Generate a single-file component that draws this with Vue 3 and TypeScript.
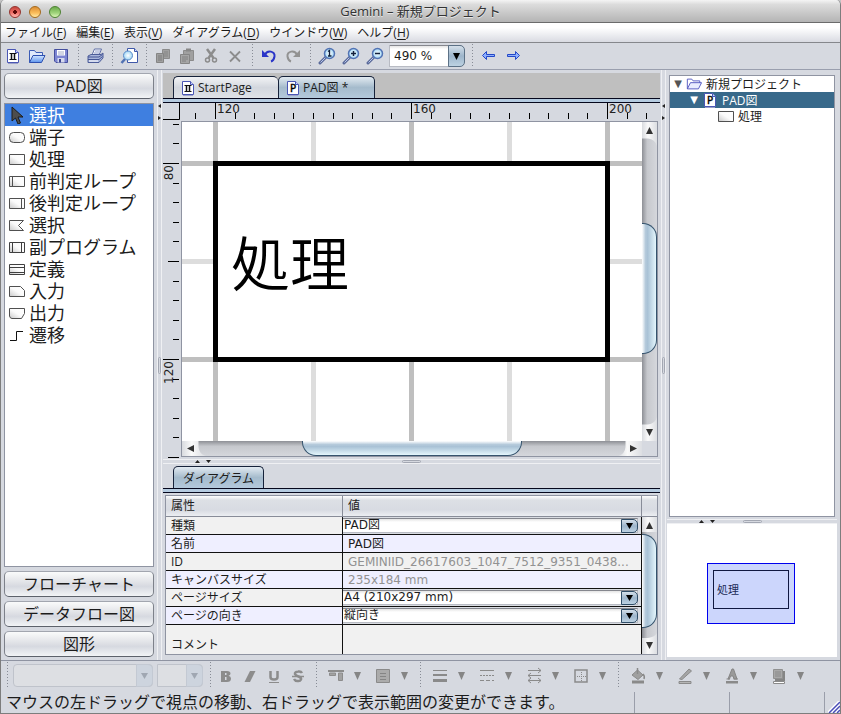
<script setup lang="ts">
import { computed, onBeforeUnmount, onMounted, ref } from 'vue'

interface Menu { label: string; key: string }
interface Tool { icon: string; label: string; disabled?: boolean }
interface Shape { icon: string; label: string }
interface Property { name: string; value: string; kind: 'combo' | 'text' | 'muted' }
interface Tick { pos: number; size: number; label: string }

const menus: Menu[] = [
  { label: 'ファイル', key: 'F' },
  { label: '編集', key: 'E' },
  { label: '表示', key: 'V' },
  { label: 'ダイアグラム', key: 'D' },
  { label: 'ウインドウ', key: 'W' },
  { label: 'ヘルプ', key: 'H' },
]

const page = '<path d="M3.500 2.500H11.500L14.500 5.500V15.500H3.500Z" fill="#fff" stroke="#4a56b4"/><path d="M11.500 2.500V5.500H14.500" fill="#cdd3ff" stroke="#4a56b4"/><path d="M4 16.500H14" stroke="#9aa0c8"/>'
const lens = '<path d="M2 16L8 10" stroke="#5a6a9a" stroke-width="3" stroke-linecap="round"/><path d="M2.500 15.500L7.500 10.500" stroke="#b8c6ea"/><circle cx="11.500" cy="6.500" r="5" fill="url(#g-lens)" stroke="#5273b4" stroke-width="1.500"/>'

const icons: Record<string, string> = {
  fresh: page + '<path d="M5.500 6.500H12.500M5.500 12.500H12.500" stroke="#111"/><path d="M7.500 6.500V12.500M10.500 6.500V12.500" stroke="#111" stroke-width="1.500"/>',
  doc: page + '<text x="9" y="13" text-anchor="middle" font-family="DejaVu Sans, sans-serif" font-size="10" fill="#000" stroke="#000" stroke-width="0.400">P</text>',
  open: '<path d="M1.500 15.500V3.500H6.500L8 5.500H14.500V8" fill="#dfe9fb" stroke="#3b5bb5"/><path d="M1.500 15.500L5 8.500H17L13.500 15.500Z" fill="url(#g-blue)" stroke="#2d50b0"/>',
  save: '<path d="M2.500 2.500H15.500V15.500H4L2.500 14Z" fill="#7d86d2" stroke="#454f9e"/><path d="M5 3H13V8.500H5Z" fill="#fff"/><path d="M6 5H12M6 7H12" stroke="#a5adc8"/><path d="M5.500 11H12.500V15.500H5.500Z" fill="#d6daee"/><path d="M7 12H9V15.500H7Z" fill="#3d4690"/>',
  print: '<path d="M6 8L8.500 2H15.500L13 8Z" fill="#fff" stroke="#5d6ca5"/><path d="M9 4H14M8 6H13" stroke="#8c9ac9"/><path d="M2 9L5 7.500H15L17 6V11L13 15.500H2Z" fill="#a9b6dc" stroke="#4c5c98"/><path d="M2 10H13L16.500 7.500M2 12.500H13L16.500 9.500" fill="none" stroke="#425394"/><path d="M3 14H12" stroke="#fff"/>',
  preview: '<path d="M7.500 1.500H14.500L17.500 4.500V15.500H7.500Z" fill="#fff" stroke="#3f58a8"/><path d="M14.500 1.500V4.500H17.500" fill="#cdd8ff" stroke="#3f58a8"/><path d="M1.500 16L5 12" stroke="#5273b4" stroke-width="2.500"/><circle cx="8" cy="8.500" r="4.500" fill="url(#g-lens)" stroke="#5b8ac8"/>',
  copy: '<path d="M8.500 2.500H15.500V11.500H8.500Z" fill="#a0a0a0" stroke="#8b8b8b"/><path d="M10 5H14M10 7H14M10 9H14" stroke="#858585"/><path d="M2.500 6.500H9.500V15.500H2.500Z" fill="#a0a0a0" stroke="#858585"/><path d="M4 9H8M4 11H8M4 13H8" stroke="#7c7c7c"/>',
  paste: '<path d="M5.500 3.500H15.500V13.500H5.500Z" fill="#a0a0a0" stroke="#8b8b8b"/><path d="M8 1.500H13V4.500H8Z" fill="#888"/><path d="M2.500 7.500H11.500V16.500H2.500Z" fill="#a5a5a5" stroke="#858585"/><path d="M4 10H10M4 12H10M4 14H8" stroke="#808080"/>',
  cut: '<path d="M5 2L11.500 11M13 2L6.500 11" stroke="#8c8c8c" stroke-width="2.500"/><circle cx="5.500" cy="13" r="2" fill="none" stroke="#8c8c8c" stroke-width="1.500"/><circle cx="12.500" cy="13" r="2" fill="none" stroke="#8c8c8c" stroke-width="1.500"/>',
  remove: '<path d="M4 4.500L14 14.500M14 4.500L4 14.500" stroke="#8c8c8c" stroke-width="1.800"/>',
  undo: '<path d="M5 8C7 2.500 15.500 4 14.500 9.500C14 12.500 12.500 14 11 14.500" fill="none" stroke="#2a35c8" stroke-width="2"/><path d="M2 3V10H9Z" fill="#2a35c8"/>',
  redo: '<path d="M13 8C11 2.500 2.500 4 3.500 9.500C4 12.500 5.500 14 7 14.500" fill="none" stroke="#929292" stroke-width="2"/><path d="M16 3V10H9Z" fill="#929292"/>',
  zoomOne: lens + '<path d="M10 4.500L11.500 3.500V9M10 9H13.500" fill="none" stroke="#10203c" stroke-width="1.300"/>',
  zoomIn: lens + '<path d="M9 6.500H14M11.500 4V9" stroke="#10203c" stroke-width="1.500"/>',
  zoomOut: lens + '<path d="M9 6.500H14" stroke="#10203c" stroke-width="1.500"/>',
  back: '<path d="M2.500 8.500L6.500 4.500V7.500H14.500V9.500H6.500V12.500Z" fill="#8fb0ff" stroke="#2348c8"/>',
  forward: '<path d="M15.500 8.500L11.500 4.500V7.500H3.500V9.500H11.500V12.500Z" fill="#8fb0ff" stroke="#2348c8"/>',
  pointer: '<path d="M4 1V15L7.500 12L10 18L12.500 17L10 11H15Z" fill="#4d4d4d" stroke="#1c1c1c"/>',
  terminal: '<rect x="1.500" y="4.500" width="15" height="10" rx="4" fill="url(#g-cell)" stroke="#505050"/>',
  process: '<path d="M1.500 4.500H16.500V14.500H1.500Z" fill="url(#g-cell)" stroke="#505050"/>',
  preLoop: '<path d="M1.500 4.500H16.500V14.500H1.500ZM4.500 4.500V14.500" fill="url(#g-cell)" stroke="#505050"/>',
  postLoop: '<path d="M1.500 4.500H16.500V14.500H1.500ZM13.500 4.500V14.500" fill="url(#g-cell)" stroke="#505050"/>',
  choice: '<path d="M1.500 4.500H15.500L10.500 9.500L15.500 14.500H1.500Z" fill="url(#g-cell)" stroke="#505050"/>',
  sub: '<path d="M1.500 4.500H16.500V14.500H1.500ZM4.500 4.500V14.500M13.500 4.500V14.500" fill="url(#g-cell)" stroke="#404040"/>',
  define: '<path d="M1.500 4.500H16.500V14.500H1.500ZM1.500 7.500H16.500M1.500 12.500H16.500" fill="url(#g-cell)" stroke="#404040"/>',
  input: '<path d="M1.500 4.500H12.500L16.500 8.500V14.500H1.500Z" fill="url(#g-cell)" stroke="#505050"/>',
  output: '<path d="M1.500 4.500H16.500V9.500L13.500 14.500H4Q2 14.500 1.500 12Z" fill="url(#g-cell)" stroke="#505050"/>',
  move: '<path d="M2 14.500H8.500V5.500H15" fill="none" stroke="#111"/>',
  folder: '<path d="M1.500 14.500V3.500H6.500L8 5.500H15.500V8" fill="#fff" stroke="#4b50bd"/><path d="M1.500 14.500L5 7.500H17.500L14 14.500Z" fill="#e9ecff" stroke="#4b50bd"/>',
  bold: '<path d="M4 4H10Q13.500 4 13.500 6.500Q13.500 8.200 11.500 8.800Q14 9.300 14 11.500Q14 15 10 15H4Z" fill="#8c8c8c"/><path d="M8 6H9.500V8H8ZM8 10H9.500V13H8Z" fill="#d6d9e0"/>',
  italic: '<path d="M9 4H14.500L9 15H3.500Z" fill="#8c8c8c"/>',
  underline: '<path d="M5.500 4V10Q5.500 12.500 9 12.500Q12.500 12.500 12.500 10V4" fill="none" stroke="#8c8c8c" stroke-width="2.500"/><path d="M4 15.500H14" stroke="#8c8c8c"/>',
  strike: '<path d="M13 6Q12 4 9 4.500Q5.500 5 6 7Q6.500 8.500 9.500 9.500Q12.500 10.500 12 12.500Q11 14.500 8.500 14Q6 14 5 12" fill="none" stroke="#8c8c8c" stroke-width="2.500"/><path d="M3 9.500H15" stroke="#8c8c8c" stroke-width="1.500"/>',
  align: '<path d="M1 4H17" stroke="#8c8c8c" stroke-width="2"/><path d="M2.500 6H8.500V8.500H2.500ZM11.500 6H15.500V13.500H11.500Z" fill="#a2a2a2" stroke="#8c8c8c"/>',
  box: '<path d="M2.500 2.500H15.500V15.500H2.500Z" fill="#ababab" stroke="#8a8a8a"/><path d="M6 6.500H12M6 9.500H12M6 12.500H12" stroke="#858585"/>',
  lines: '<path d="M2 3.500H16" stroke="#8a8a8a"/><path d="M2 8H16" stroke="#8a8a8a" stroke-width="2"/><path d="M2 13.500H16" stroke="#8a8a8a" stroke-width="3"/>',
  dashes: '<path d="M2 3.500H16" stroke="#8a8a8a"/><path d="M2 8.500H16" stroke="#8a8a8a" stroke-dasharray="2 1"/><path d="M2 13.500H16" stroke="#8a8a8a" stroke-dasharray="4 2"/>',
  arrows: '<path d="M3 3.500H16M13 1L16 3.500L13 6M3 8.500H16M6 6L3 8.500L6 11M3 13.500H16M6 11L3 13.500L6 16M13 11L16 13.500L13 16" fill="none" stroke="#8a8a8a"/>',
  border: '<path d="M3 3H15V15H3Z" fill="none" stroke="#8a8a8a" stroke-width="1.500"/><path d="M9.500 5V14M5 9.500H14" stroke="#8a8a8a" stroke-dasharray="1 1"/>',
  bucket: '<path d="M3 8L8.500 3L14 8L9 12.500Z" fill="#a0a0a0" stroke="#8a8a8a"/><path d="M8.500 1V7M14 7Q16 9 15 12" fill="none" stroke="#8a8a8a" stroke-width="1.500"/><path d="M3 13.500H15V16.500H3Z" fill="#8a8a8a"/>',
  pen: '<path d="M3.500 12L13 2L15.500 4L6 12.500Z" fill="#a5a5a5" stroke="#8a8a8a"/><path d="M3 14.500H15V16.500H3Z" fill="#b5b5b5" stroke="#8a8a8a"/>',
  color: '<path d="M3.500 12H7M10.500 12H15" stroke="#8a8a8a"/><path d="M5 12L9 2H10.500L14 12H11L10 9H7.500L6.500 12Z" fill="#9a9a9a" stroke="#858585"/><path d="M3 14H15V16.500H3Z" fill="#8a8a8a"/>',
  shadow: '<path d="M5 4H15V14H5Z" fill="#858585"/><path d="M3.500 2.500H12.500V11.500H3.500Z" fill="#a8a8a8" stroke="#909090"/><path d="M5 5H11M5 7H11M5 9H11" stroke="#8a8a8a"/><path d="M3.500 14.500H14.500V16.500H3.500Z" fill="#fff" stroke="#8a8a8a"/>',
}

const toolGroups: Tool[][] = [
  [{ icon: 'fresh', label: '新規' }, { icon: 'open', label: '開く' }, { icon: 'save', label: '保存' }],
  [{ icon: 'print', label: '印刷' }],
  [{ icon: 'preview', label: '印刷プレビュー' }],
  [
    { icon: 'copy', label: 'コピー', disabled: true },
    { icon: 'paste', label: '貼り付け', disabled: true },
    { icon: 'cut', label: '切り取り', disabled: true },
    { icon: 'remove', label: '削除', disabled: true },
  ],
  [{ icon: 'undo', label: '元に戻す' }, { icon: 'redo', label: 'やり直し', disabled: true }],
  [{ icon: 'zoomOne', label: '等倍' }, { icon: 'zoomIn', label: '拡大' }, { icon: 'zoomOut', label: '縮小' }],
]
const historyTools: Tool[] = [{ icon: 'back', label: '戻る' }, { icon: 'forward', label: '進む' }]

const shapes: Shape[] = [
  { icon: 'pointer', label: '選択' },
  { icon: 'terminal', label: '端子' },
  { icon: 'process', label: '処理' },
  { icon: 'preLoop', label: '前判定ループ' },
  { icon: 'postLoop', label: '後判定ループ' },
  { icon: 'choice', label: '選択' },
  { icon: 'sub', label: '副プログラム' },
  { icon: 'define', label: '定義' },
  { icon: 'input', label: '入力' },
  { icon: 'output', label: '出力' },
  { icon: 'move', label: '遷移' },
]
const activeShape = ref(0)
const palettes = ['フローチャート', 'データフロー図', '図形']

const properties: Property[] = [
  { name: '種類', value: 'PAD図', kind: 'combo' },
  { name: '名前', value: 'PAD図', kind: 'text' },
  { name: 'ID', value: 'GEMINIID_26617603_1047_7512_9351_0438...', kind: 'muted' },
  { name: 'キャンバスサイズ', value: '235x184 mm', kind: 'muted' },
  { name: 'ページサイズ', value: 'A4 (210x297 mm)', kind: 'combo' },
  { name: 'ページの向き', value: '縦向き', kind: 'combo' },
  { name: 'コメント', value: '', kind: 'text' },
]

const styleTools: Tool[] = [
  { icon: 'bold', label: '太字' },
  { icon: 'italic', label: '斜体' },
  { icon: 'underline', label: '下線' },
  { icon: 'strike', label: '取り消し線' },
]
const formatGroups: Tool[][] = [
  [{ icon: 'align', label: '配置' }, { icon: 'box', label: '文字位置' }],
  [{ icon: 'lines', label: '線の太さ' }, { icon: 'dashes', label: '線種' }, { icon: 'arrows', label: '矢印' }, { icon: 'border', label: '枠線' }],
  [{ icon: 'bucket', label: '塗りつぶし' }, { icon: 'pen', label: '線の色' }, { icon: 'color', label: '文字色' }, { icon: 'shadow', label: '影' }],
]

// The rulers show only the ticks that fit in the editor.
const editor = ref<HTMLElement | null>(null)
const room = ref({ across: 0, down: 0 })
function measure() {
  if (!editor.value) return
  room.value = { across: editor.value.clientWidth, down: editor.value.clientHeight - 18 }
}
onMounted(() => {
  measure()
  window.addEventListener('resize', measure)
})
onBeforeUnmount(() => window.removeEventListener('resize', measure))

// One tick every 4 units, a labelled one every 40.
const step = 19.6
function ticks(origin: number, firstValue: number, from: number, limit: number, labelRoom: number, half: boolean): Tick[] {
  const out: Tick[] = []
  for (let k = from; Math.round(origin + k * step) < limit; k++) {
    const pos = Math.round(origin + k * step)
    const major = k % 10 === 0
    const size = major ? 16 : half && k % 5 === 0 ? 11 : 6
    out.push({ pos, size, label: major && pos + labelRoom < limit ? String(firstValue + k * 4) : '' })
  }
  return out
}
const ticksAcross = computed(() => ticks(52, 120, -1, room.value.across, 28, false))
const ticksDown = computed(() => ticks(42, 80, -2, room.value.down, 28, true))

const gridAcross = Array.from({ length: 16 }, (_, i) => ({ at: 31 + i * 98, strong: i % 2 === 0 }))
const gridDown = Array.from({ length: 12 }, (_, i) => ({ at: 39 + i * 98, strong: i % 2 === 0 }))

const canvasV = [77, 130, 63]
const canvasH = [96, 219, 96]
const sheetV = [2, 94, 5]
</script>

<template>
  <div class="window">
    <svg class="defs" width="0" height="0" aria-hidden="true">
      <defs>
        <linearGradient id="g-blue" x1="0" y1="0" x2="0" y2="1"><stop offset="0" stop-color="#d4e6ff" /><stop offset="1" stop-color="#5b93ee" /></linearGradient>
        <linearGradient id="g-cell" x1="0" y1="1" x2="1" y2="0"><stop offset="0" stop-color="#c9c9c9" /><stop offset="0.5" stop-color="#fbfbfb" /><stop offset="1" stop-color="#ffffff" /></linearGradient>
        <radialGradient id="g-lens"><stop offset="0" stop-color="#ffffff" /><stop offset="1" stop-color="#9fd6f5" /></radialGradient>
        <linearGradient id="g-cap" x1="0" y1="0" x2="1" y2="0"><stop offset="0" stop-color="#d9dbdf" /><stop offset="0.4" stop-color="#fafafa" /><stop offset="1" stop-color="#dcdee2" /></linearGradient>
      </defs>
    </svg>

    <header class="title">
      <div class="lights">
        <button class="light red" aria-label="閉じる"></button>
        <button class="light amber" aria-label="しまう"></button>
        <button class="light green" aria-label="拡大"></button>
      </div>
      <h1>Gemini – 新規プロジェクト</h1>
    </header>

    <nav class="menus">
      <button v-for="m in menus" :key="m.key">{{ m.label }}(<u>{{ m.key }}</u>)</button>
    </nav>

    <div class="toolbar">
      <template v-for="(group, g) in toolGroups" :key="g">
        <i v-if="g" class="sep"></i>
        <button v-for="t in group" :key="t.icon" class="tool" :aria-label="t.label" :disabled="t.disabled">
          <svg width="18" height="18" viewBox="0 0 18 18" v-html="icons[t.icon]"></svg>
        </button>
      </template>
      <span class="combo zoom">
        <select aria-label="倍率"><option>490 %</option></select>
        <span class="drop"><svg width="9" height="7" viewBox="0 0 9 7"><path d="M1 0H8L4.500 7Z" /></svg></span>
      </span>
      <i class="sep"></i>
      <button v-for="t in historyTools" :key="t.icon" class="tool" :aria-label="t.label">
        <svg width="18" height="18" viewBox="0 0 18 18" v-html="icons[t.icon]"></svg>
      </button>
    </div>

    <main class="body">
      <aside class="palette">
        <button class="bar">PAD図</button>
        <ul class="shapes">
          <li v-for="(s, i) in shapes" :key="i">
            <button :class="{ active: i === activeShape }" @click="activeShape = i">
              <svg width="18" height="18" viewBox="0 0 18 18" v-html="icons[s.icon]"></svg>{{ s.label }}
            </button>
          </li>
        </ul>
        <button v-for="p in palettes" :key="p" class="bar">{{ p }}</button>
      </aside>

      <div class="split-v left">
        <svg width="3" height="16" viewBox="0 0 3 16"><path d="M3 0V4L0 2ZM0 12V16L3 14Z" fill="#222" /></svg>
        <i class="grip"></i>
      </div>

      <section class="center">
        <div class="tabs gray">
          <button class="tab first"><svg width="18" height="18" viewBox="0 0 18 18" v-html="icons.fresh"></svg>StartPage</button>
          <button class="tab second on"><svg width="18" height="18" viewBox="0 0 18 18" v-html="icons.doc"></svg>PAD図 *</button>
        </div>
        <div class="rail"></div>

        <div ref="editor" class="editor">
          <svg class="ruler-h" width="100%" height="18">
            <path d="M0 16.500H16.500V0" fill="none" stroke="#000" />
            <template v-for="t in ticksAcross" :key="t.pos">
              <rect :x="t.pos" :y="16 - t.size" width="1" :height="t.size" />
              <text v-if="t.label" :x="t.pos + 2" y="10">{{ t.label }}</text>
            </template>
          </svg>
          <svg class="ruler-v" width="18" height="100%">
            <template v-for="t in ticksDown" :key="t.pos">
              <rect :x="16 - t.size" :y="t.pos" :width="t.size" height="1" />
              <text v-if="t.label" text-anchor="end" :transform="`translate(10 ${t.pos + 2}) rotate(-90)`">{{ t.label }}</text>
            </template>
          </svg>
          <div class="view">
            <svg class="canvas" width="100%" height="100%">
              <rect width="100%" height="100%" fill="#fff" />
              <rect v-for="l in gridDown" :key="'h' + l.at" x="0" :y="l.at" width="100%" height="5" :fill="l.strong ? '#bfbfbf' : '#dddddd'" />
              <rect v-for="l in gridAcross" :key="'v' + l.at" :x="l.at" y="0" width="5" height="100%" :fill="l.strong ? '#bfbfbf' : '#dddddd'" />
              <rect x="33.500" y="41.500" width="392" height="196" fill="#fff" stroke="#000" stroke-width="5" />
              <text x="49" y="164">処理</text>
            </svg>
            <div class="scroll-v">
              <svg width="15" height="24" viewBox="0 0 15 24"><path d="M0 0H15V24Q13 17 6 16.500H0Z" fill="url(#g-cap)" /><path d="M4 12H11L7.500 5Z" fill="#333" /></svg>
              <i v-for="(f, i) in canvasV" :key="i" :class="i === 1 ? 'thumb' : 'gap'" :style="{ flexGrow: f }"></i>
              <svg width="15" height="24" viewBox="0 0 15 24"><path d="M0 24H15V0Q13 7 6 7.500H0Z" fill="url(#g-cap)" /><path d="M4 12H11L7.500 19Z" fill="#333" /></svg>
            </div>
            <div class="scroll-h">
              <svg width="24" height="15" viewBox="0 0 24 15"><path d="M0 0V15H24Q17 13 16.500 6V0Z" fill="url(#g-cap)" /><path d="M12 4V11L5 7.500Z" fill="#333" /></svg>
              <i v-for="(f, i) in canvasH" :key="i" :class="i === 1 ? 'thumb' : 'gap'" :style="{ flexGrow: f }"></i>
              <svg width="24" height="15" viewBox="0 0 24 15"><path d="M24 0V15H0Q7 13 7.500 6V0Z" fill="url(#g-cap)" /><path d="M12 4V11L19 7.500Z" fill="#333" /></svg>
            </div>
          </div>
        </div>

        <div class="split-h">
          <svg width="16" height="3" viewBox="0 0 16 3"><path d="M0 3H5L2.500 0ZM11 0H16L13.500 3Z" fill="#222" /></svg>
          <i class="grip"></i>
        </div>

        <div class="tabs low"><button class="tab only on">ダイアグラム</button></div>
        <div class="rail"></div>

        <div class="sheet">
          <table>
            <thead><tr><th class="name">属性</th><th>値</th></tr></thead>
            <tbody>
              <tr v-for="p in properties" :key="p.name">
                <td class="name">{{ p.name }}</td>
                <td v-if="p.kind === 'combo'" class="field">
                  <span class="combo cell">
                    <select :aria-label="p.name"><option>{{ p.value }}</option></select>
                    <span class="drop"><svg width="9" height="6" viewBox="0 0 9 6"><path d="M1 0H8L4.500 6Z" /></svg></span>
                  </span>
                </td>
                <td v-else :class="{ muted: p.kind === 'muted' }">{{ p.value }}</td>
              </tr>
            </tbody>
          </table>
          <div class="side">
            <div class="cap"></div>
            <div class="scroll-v">
              <svg width="15" height="15" viewBox="0 0 15 15"><path d="M0 0H15V15H0Z" fill="url(#g-cap)" /><path d="M4 12H11L7.500 5Z" fill="#333" /></svg>
              <i v-for="(f, i) in sheetV" :key="i" :class="i === 1 ? 'thumb' : 'gap'" :style="{ flexGrow: f }"></i>
              <svg width="15" height="21" viewBox="0 0 15 21"><path d="M0 21H15V0Q13 4 6 5H0Z" fill="url(#g-cap)" /><path d="M4 9H11L7.500 16Z" fill="#333" /></svg>
            </div>
          </div>
        </div>
      </section>

      <div class="split-v right">
        <svg width="3" height="16" viewBox="0 0 3 16"><path d="M3 0V4L0 2ZM0 12V16L3 14Z" fill="#222" /></svg>
        <i class="grip"></i>
      </div>

      <aside class="project">
        <ul class="tree">
          <li class="node"><span class="twist">▼</span><svg width="16" height="16" viewBox="0 0 18 18" v-html="icons.folder"></svg>新規プロジェクト</li>
          <li class="node two picked"><span class="twist">▼</span><svg width="16" height="16" viewBox="1 1 16 16" v-html="icons.doc"></svg>PAD図</li>
          <li class="node three"><span class="twist"></span><svg width="16" height="16" viewBox="1 1 16 16" v-html="icons.process"></svg>処理</li>
        </ul>
        <div class="split-h">
          <svg width="16" height="3" viewBox="0 0 16 3"><path d="M0 3H5L2.500 0ZM11 0H16L13.500 3Z" fill="#222" /></svg>
          <i class="grip"></i>
        </div>
        <div class="preview"><div class="extent"><div class="mini">処理</div></div></div>
      </aside>
    </main>

    <div class="format">
      <i class="sep"></i>
      <span class="combo off family"><select aria-label="フォント" disabled></select><span class="drop"><svg width="9" height="6" viewBox="0 0 9 6"><path d="M1 0H8L4.500 6Z" /></svg></span></span>
      <span class="combo off size"><select aria-label="文字サイズ" disabled></select><span class="drop"><svg width="9" height="6" viewBox="0 0 9 6"><path d="M1 0H8L4.500 6Z" /></svg></span></span>
      <i class="sep"></i>
      <div class="styles">
        <button v-for="t in styleTools" :key="t.icon" disabled :aria-label="t.label"><svg width="18" height="18" viewBox="0 0 18 18" v-html="icons[t.icon]"></svg></button>
      </div>
      <template v-for="(group, g) in formatGroups" :key="g">
        <i class="sep"></i>
        <div class="pairs">
          <div v-for="t in group" :key="t.icon" class="pair">
            <button class="main" disabled :aria-label="t.label"><svg width="18" height="18" viewBox="0 0 18 18" v-html="icons[t.icon]"></svg></button>
            <button class="more" disabled :aria-label="t.label + 'の選択'"><svg width="7" height="8" viewBox="0 0 7 8"><path d="M0 0H7L3.500 8Z" fill="#858585" /></svg></button>
          </div>
        </div>
      </template>
    </div>

    <footer class="status">
      <p>マウスの左ドラッグで視点の移動、右ドラッグで表示範囲の変更ができます。</p>
      <span class="slot"></span>
      <span class="slot"></span>
      <span class="slot last"><svg width="12" height="12" viewBox="0 0 12 12"><path d="M0 12L12 0M4 12L12 4M8 12L12 8" stroke="#fff" stroke-width="3" /><path d="M1 12L12 1M5 12L12 5M9 12L12 9" stroke="#4a4db8" stroke-width="1.500" /></svg></span>
    </footer>
  </div>
</template>

<style>
body {
  margin: 0;
  background: #c4c4c4;
}
</style>

<style scoped>
.window {
  box-sizing: border-box;
  display: flex;
  flex-direction: column;
  height: 100vh;
  min-height: 560px;
  border: solid #7d7d7d;
  border-width: 0 1px 1px;
  border-radius: 5px 5px 0 0;
  overflow: hidden;
  background: #d6d9e0;
  color: #1c1c1c;
  font: 12px/16px "Open Sans", "Noto Sans CJK JP", sans-serif;
  white-space: nowrap;
}
.defs { position: absolute; }
button, select {
  margin: 0;
  padding: 0;
  border: 0;
  background: none;
  color: inherit;
  font: inherit;
}
svg { display: block; flex: none; }
ul { margin: 0; padding: 0; list-style: none; }

.title {
  display: grid;
  grid-template-columns: 1fr auto 1fr;
  align-items: center;
  height: 22px;
  border-bottom: 1px solid #6b6b6b;
  background: linear-gradient(#f4f4f4, #dcdcdc 20%, #b4b4b4);
}
.title h1 {
  margin: 0;
  color: #333;
  font-size: 13px;
  font-weight: 400;
  line-height: 18px;
  text-shadow: 0 1px 0 #e8e8e8;
}
.lights { display: flex; gap: 8px; padding: 2px 0 0 8px; }
.light {
  box-sizing: border-box;
  width: 12px;
  height: 12px;
  border: 1px solid;
  border-radius: 50%;
}
.red { border-color: #94322c; background: radial-gradient(circle at 50% 50%, #5c0a08 0 2px, transparent 2px), linear-gradient(#c4443c, #f2736b 60%, #ffc0b8); }
.amber { border-color: #a56a1c; background: linear-gradient(#dc8d34, #fbbe5c 60%, #ffeaa6); }
.green { border-color: #4c8231; background: linear-gradient(#6bab4b, #a0d47c 60%, #dcf6b8); }

.menus {
  display: flex;
  gap: 10px;
  height: 19px;
  padding-left: 4px;
  border-bottom: 1px solid #85878c;
  background: linear-gradient(#fff 25%, #d9dbe2);
  line-height: 18px;
}
.menus u { text-underline-offset: 2px; }

.toolbar, .format { display: flex; align-items: center; }
.toolbar { height: 26px; border-bottom: 1px solid #9a9fae; }
.tool { display: flex; justify-content: center; width: 24px; }
.sep {
  flex: none;
  width: 10px;
  height: 24px;
  background: repeating-linear-gradient(#888c96 0 1px, transparent 1px 3px) center / 1px 100% no-repeat;
}

.combo { display: grid; flex: none; }
.combo select {
  grid-area: 1 / 1;
  box-sizing: border-box;
  width: 100%;
  appearance: none;
  border: 1px solid #b8bbc3;
  border-top-color: #85878e;
  background: linear-gradient(#e4e4e4, #fff 3px);
  font-family: "DejaVu Sans", "Noto Sans CJK JP", sans-serif;
}
.drop {
  grid-area: 1 / 1;
  box-sizing: border-box;
  display: grid;
  place-items: center;
  justify-self: end;
  width: 17px;
  border: 1px solid #5c7186;
  border-radius: 0 5px 5px 0;
  background: linear-gradient(#d5e0ea, #9db5cb 50%, #bdd2e2);
  pointer-events: none;
}
.zoom { width: 76px; height: 22px; margin: 0 2px; }
.zoom select { padding-left: 4px; border-radius: 0 6px 6px 0; }

.body { display: flex; flex: 1; min-height: 0; padding: 0 3px; }

.palette {
  display: flex;
  flex: none;
  flex-direction: column;
  gap: 4px;
  width: 150px;
  padding: 3px 0;
}
.bar {
  box-sizing: border-box;
  height: 26px;
  border: 1px solid #7d818a;
  border-top-color: #a2a6af;
  border-bottom-color: #5d626b;
  border-radius: 5px;
  background: linear-gradient(#fafbfb, #dddfe4 50%, #d6d9e0 60%, #f2f4f6);
  font-size: 16px;
  line-height: 24px;
}
.shapes {
  flex: 1;
  border: 1px solid #8f94a2;
  background: #fff;
  font-size: 18px;
}
.shapes button {
  display: flex;
  align-items: center;
  gap: 3px;
  width: 100%;
  height: 22px;
  padding-left: 3px;
  line-height: 22px;
}
.shapes .active { background: #3f7fe0; color: #fff; }

.split-v {
  position: relative;
  box-sizing: border-box;
  flex: none;
  width: 5px;
  border: solid #eff0f3;
  border-width: 0 1px;
  display: flex;
  align-items: center;
}
.split-v svg { position: absolute; top: 34px; left: 0; }
.left { margin: 0 1px 0 3px; }
.right { margin: 0 1px; }
.grip { box-sizing: border-box; border: 1px solid #a3a7b2; border-radius: 2px; }
.split-v .grip { width: 3px; height: 17px; }
.split-h {
  position: relative;
  box-sizing: border-box;
  display: flex;
  flex: none;
  justify-content: center;
  height: 5px;
  border: solid #eff0f3;
  border-width: 1px 0;
}
.split-h svg { position: absolute; top: 0; left: 32px; }
.split-h .grip { width: 19px; height: 3px; }

.center { display: flex; flex: 1; flex-direction: column; min-width: 0; padding: 3px 0 5px; }
.tabs { display: flex; align-items: flex-end; box-sizing: border-box; padding-left: 10px; }
.gray { height: 25px; background: #bfbfbf; }
.low { height: 24px; }
.tab {
  box-sizing: border-box;
  display: flex;
  align-items: center;
  gap: 1px;
  height: 22px;
  padding-left: 5px;
  border: 1px solid #16223a;
  border-bottom: 0;
  border-radius: 5px 5px 0 0;
  background: linear-gradient(#f2f3f5, #d3d7de 50%, #dfe2e7);
}
.on { background: linear-gradient(#e2eaf1, #a5bbcc 50%, #b4c9dc); }
.first { width: 105px; border-right: 0; }
.second { width: 97px; }
.only { padding: 2px 9px 0; }
.rail { flex: none; height: 3px; border: solid #05071c; border-width: 1px 0; background: #b5cbe0; }

.editor {
  display: grid;
  flex: 1;
  grid-template: 18px minmax(0, 1fr) / 18px minmax(0, 1fr);
  min-height: 0;
}
.ruler-h { grid-column: 1 / 3; overflow: hidden; }
.ruler-v { overflow: hidden; }
.editor text { font: 12px "DejaVu Sans", sans-serif; fill: #222; }
.view {
  display: grid;
  grid-template: minmax(0, 1fr) 15px / minmax(0, 1fr) 15px;
  margin: 0 2px 2px 0;
  border: 1px solid #8f94a2;
}
.editor .canvas text { font: 350 59px "Noto Sans CJK JP", sans-serif; fill: #000; }

.scroll-v, .scroll-h { display: flex; min-height: 0; min-width: 0; }
.scroll-v { flex-direction: column; background: linear-gradient(90deg, #8e9096, #c6c8cd 35%, #d5d7dc); }
.scroll-h { background: linear-gradient(#8e9096, #c6c8cd 35%, #d5d7dc); }
.gap, .thumb { flex: 0 1 0; }
.thumb { border: 1px solid #35536d; }
.scroll-v .thumb {
  border-left: 0;
  border-radius: 0 14px 14px 0;
  background: linear-gradient(90deg, #fff, #b5cadb 25%, #a9c2d6 40%, #e4f6fc);
}
.scroll-h .thumb {
  border-top: 0;
  border-radius: 0 0 14px 14px;
  background: linear-gradient(#fff, #b5cadb 25%, #a9c2d6 40%, #e4f6fc);
}

.sheet { display: flex; flex: none; margin: 2px 2px 0; border: 1px solid #8f94a2; }
table { flex: 1; min-width: 0; border-spacing: 0; table-layout: fixed; }
th, td { box-sizing: border-box; padding: 0 5px; overflow: hidden; text-align: left; font-weight: 400; }
th, .cap { border-right: 1px solid #888c98; border-bottom: 1px solid #888c98; background: linear-gradient(#fff, #dde0e5 20%, #d8dbe2 70%, #eceef2); }
th { height: 21px; }
td {
  height: 18px;
  border: solid #111;
  border-width: 0 1px 1px 0;
  font-family: "DejaVu Sans", "Noto Sans CJK JP", sans-serif;
  line-height: 16px;
}
.name { width: 177px; font-family: inherit; }
tbody tr { background: #f1f1f1; }
tbody tr:nth-child(even) { background: #efefff; }
tbody tr:last-child td { height: 29px; padding-top: 10px; border-bottom: 0; }
.muted { color: #929292; }
.field { padding: 0 3px 0 0; background: #d9dce2; }
.cell { height: 16px; }
.cell select { height: 15px; align-self: center; padding-left: 1px; border-left: 0; line-height: 13px; }
.cell .drop { height: 14px; align-self: center; border-color: #2f4d67; }
.side { display: flex; flex-direction: column; width: 15px; }
.side .scroll-v { flex: 1; }
.cap { box-sizing: border-box; height: 21px; border-right: 0; }

.project { display: flex; flex: none; flex-direction: column; width: 170px; padding: 5px 0 3px; }
.tree { flex: 1; margin: 0 2px 2px; border: 1px solid #8f94a2; background: #fff; }
.node { display: flex; height: 16px; line-height: 17px; }
.node svg { margin-right: 4px; }
.two { padding-left: 16px; }
.three { padding-left: 32px; }
.picked { background: #38698a; color: #fff; }
.twist { width: 16px; color: #555; font: 10px/16px "DejaVu Sans", sans-serif; text-align: center; }
.picked .twist { color: #fff; }
.preview { display: flex; align-items: center; justify-content: center; height: 133px; padding-right: 2px; background: #fff; }
.extent { box-sizing: border-box; width: 88px; height: 61px; margin-top: 6px; padding: 6px 5px; border: 1px solid #00e; background: #ccd6fc; }
.mini { height: 37px; padding-left: 3px; border: 1px solid #101840; color: #202a55; font-size: 11px; line-height: 38px; }

.format { flex: none; height: 29px; border-top: 1px solid #8f94a2; }
.format .sep { width: 14px; height: 27px; }
.format > .sep:first-child { width: 12px; }
.off { height: 23px; }
.off select { border-color: #bfc3cb; border-radius: 4px; background: #dddfe3; opacity: 1; }
.off .drop { border-color: #c3c9d3; background: #cdd4de; fill: #a0a7b2; }
.family { width: 140px; margin-right: 4px; }
.size { width: 46px; }
.size select { border-radius: 0 4px 4px 0; }
.styles { display: flex; gap: 6px; padding-right: 2px; }
.pairs { display: flex; gap: 4px; }
.pair { display: flex; }
.main, .more { display: flex; align-items: center; justify-content: center; }
.main { width: 25px; }
.more { width: 18px; }

.status { display: flex; flex: none; height: 23px; font-size: 16px; line-height: 24px; }
.status p { flex: 1; min-width: 0; margin: 0; padding-left: 5px; overflow: hidden; }
.slot { box-sizing: border-box; width: 95px; margin-top: 2px; border-left: 1px solid #9a9eaa; }
.last { display: flex; align-items: flex-end; justify-content: flex-end; width: 16px; }
</style>
